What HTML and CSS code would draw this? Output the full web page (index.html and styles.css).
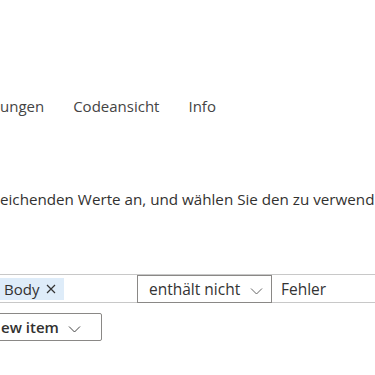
FILE: index.html
```html
<!DOCTYPE html>
<html lang="de">
<head>
  <meta charset="UTF-8" />
  <meta name="viewport" content="width=device-width, initial-scale=1.0"/>
  <title>Bedingung</title>
  <link rel="stylesheet" href="styles.css">
</head>
<body>
  <div class="page">
    <nav class="tabs">
      <span class="tab">ungen</span>
      <span class="tab">Codeansicht</span>
      <span class="tab">Info</span>
    </nav>

    <p class="hint">eichenden Werte an, und wählen Sie den zu verwend</p>

    <div class="condition">
      <div class="token-field">
        <span class="chip">Body
          <svg width="10" height="10" viewBox="0 0 10 10"><path d="M1 1 L9 9 M9 1 L1 9" stroke="#333" stroke-width="1.2"/></svg>
        </span>
      </div>
      <div class="select">
        <span>enthält nicht</span>
        <svg class="chev" width="13" height="8" viewBox="0 0 13 8"><path d="M1 1.5 L6.5 7 L12 1.5" fill="none" stroke="#666" stroke-width="1"/></svg>
      </div>
      <div class="value">Fehler</div>
    </div>

    <button class="new-item">ew item
      <svg class="chev" width="13" height="8" viewBox="0 0 13 8"><path d="M1 1.5 L6.5 7 L12 1.5" fill="none" stroke="#444" stroke-width="1"/></svg>
    </button>
  </div>
</body>
</html>
```

FILE: styles.css
```css
body {
  margin: 0;
  background: #fff;
  font-family: 'Open Sans', 'Noto Sans', sans-serif;
  color: #323130;
  overflow: hidden;
}
.page {
  width: 375px;
  height: 375px;
  overflow: hidden;
}
.tabs {
  display: flex;
  gap: 29px;
  padding-top: 95px;
  font-size: 15px;
  line-height: 22px;
  color: #444;
  white-space: nowrap;
}
.hint {
  margin: 0;
  padding-top: 72px;
  font-size: 15.2px;
  line-height: 20px;
  white-space: nowrap;
}
.condition {
  display: flex;
  margin-top: 65px;
  height: 27px;
  border-top: 1px solid #c8c8c8;
  border-bottom: 1px solid #c8c8c8;
  white-space: nowrap;
}
.token-field {
  width: 137px;
  display: flex;
  align-items: center;
  border-right: 1px solid #c8c8c8;
}
.chip {
  background: #deecf9;
  height: 22px;
  padding: 0 8px 0 4px;
  font-size: 15px;
  display: flex;
  align-items: center;
  gap: 7px;
}
.select {
  width: 135px;
  box-sizing: border-box;
  margin: 0 0 -1px -1px;
  border: 1px solid #8a8886;
  display: flex;
  align-items: center;
  justify-content: space-between;
  padding: 0 8px 0 11px;
  font-size: 15.5px;
  color: #333;
}
.value {
  flex: 1;
  padding-left: 9px;
  display: flex;
  align-items: center;
  font-size: 15.5px;
  color: #333;
}
.chev {
  margin-top: 3px;
}
.new-item {
  display: flex;
  align-items: center;
  gap: 9px;
  margin-top: 10px;
  margin-left: -4px;
  width: 106px;
  height: 28px;
  padding: 0 0 0 4px;
  background: #fff;
  border: 1px solid #8a8886;
  border-radius: 2px;
  font-family: 'Open Sans', 'Noto Sans', sans-serif;
  font-size: 15px;
  font-weight: 600;
  color: #323130;
}
```
